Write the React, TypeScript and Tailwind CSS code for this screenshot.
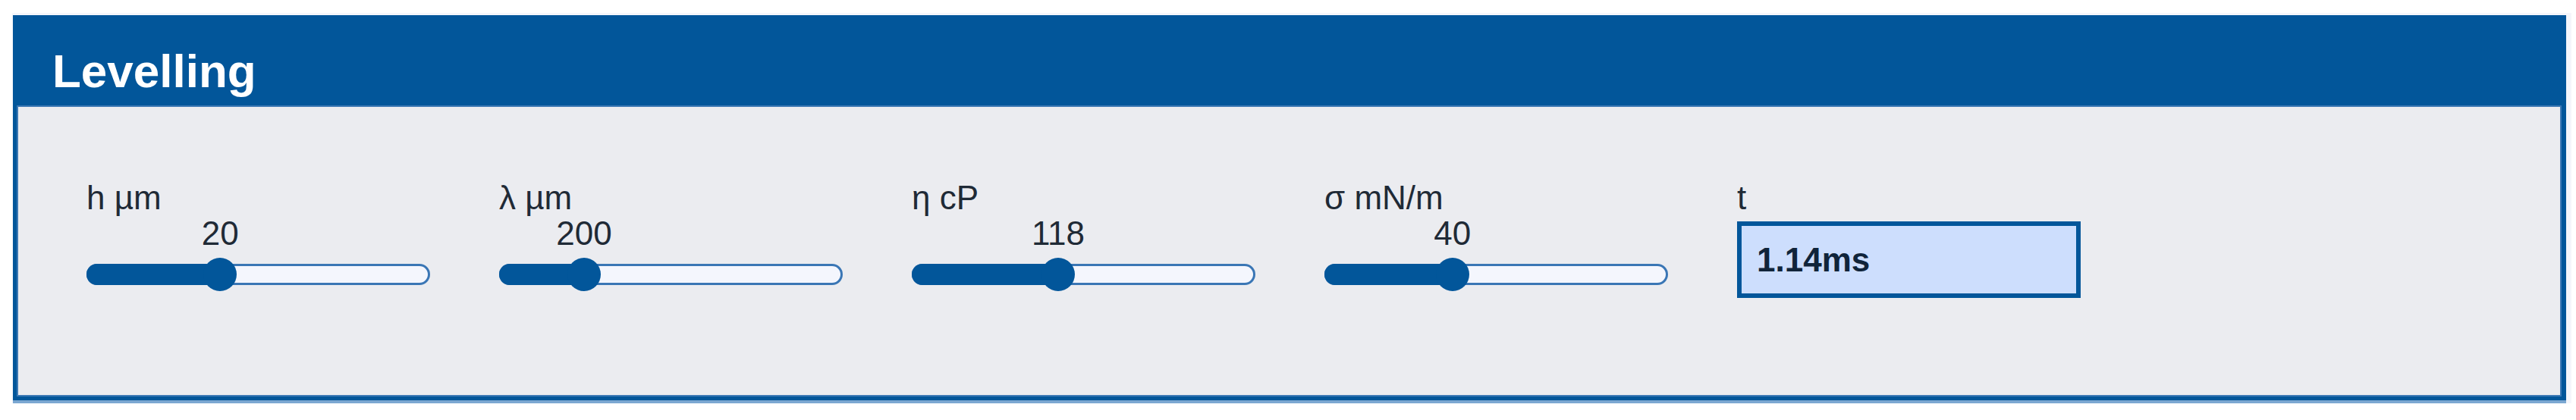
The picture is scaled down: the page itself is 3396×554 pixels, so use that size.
import React from 'react';

// ─── Data ───────────────────────────────────────────────────────────

interface SliderSpec {
  label: string;
  value: string;
  /** thumb position along the track, 0..1 */
  fraction: number;
}

const SLIDERS: SliderSpec[] = [
  { label: 'h µm', value: '20', fraction: 0.377 },
  { label: 'λ µm', value: '200', fraction: 0.22 },
  { label: 'η cP', value: '118', fraction: 0.418 },
  { label: 'σ mN/m', value: '40', fraction: 0.359 },
];

const TRACK_W = 453;
const THUMB = 44;

// ─── Slider ─────────────────────────────────────────────────────────

function LabelledSlider({ label, value, fraction }: SliderSpec) {
  const center = THUMB / 2 + fraction * (TRACK_W - THUMB);

  return (
    <div className="flex w-[453px] flex-col">
      <div className="h-[47px] text-[44px] leading-[47px] text-[#1f2a36]">{label}</div>

      {/* value bubble follows the thumb */}
      <div className="relative h-[47px]">
        <span
          className="absolute top-0 -translate-x-1/2 text-[44px] leading-[47px] text-[#1f2a36]"
          style={{ left: center }}
        >
          {value}
        </span>
      </div>

      <div className="relative mt-[9px] h-[44px]">
        <div className="absolute inset-x-0 top-[8px] h-[28px] rounded-full border-[3px] border-[#3a76b5] bg-[#f4f6fd]" />
        <div
          className="absolute left-0 top-[8px] h-[28px] rounded-l-full bg-[#02569a]"
          style={{ width: center }}
        />
        <div
          className="absolute top-0 h-[44px] w-[44px] rounded-full bg-[#02569a]"
          style={{ left: center - THUMB / 2 }}
        />
      </div>
    </div>
  );
}

// ─── Page ───────────────────────────────────────────────────────────

export default function App() {
  return (
    <div
      className="min-h-screen bg-white pl-[16px] pt-[17px]"
      style={{ fontFamily: '"Liberation Sans", Arial, sans-serif' }}
    >
      <div className="w-[3374px] bg-[#f5f6fb] pb-[4px] pl-[1px] pr-[7px] pt-[3px]">
        <section className="flex flex-col bg-[#02569a] shadow-[0_4px_0_#7ba7d1]">
          <header className="h-[119px] pl-[52px] pt-[27px] text-[62px] font-bold leading-normal text-white">
            Levelling
          </header>

          <div className="mb-[5px] ml-[5px] mr-[6px] flex h-[384px] gap-[91px] bg-[#ebecf0] pl-[92px] pt-[98px] shadow-[inset_0_0_0_2px_#3c78b4]">
            {SLIDERS.map((s) => (
              <LabelledSlider key={s.label} {...s} />
            ))}

            {/* computed result */}
            <div className="flex w-[453px] flex-col">
              <div className="h-[47px] text-[44px] leading-[47px] text-[#1f2a36]">t</div>
              <div className="mt-[8px] flex h-[101px] items-center border-[6px] border-[#02569a] bg-[#cddefd] pl-[20px] text-[44px] font-bold text-[#10243a]">
                1.14ms
              </div>
            </div>
          </div>
        </section>
      </div>
    </div>
  );
}
